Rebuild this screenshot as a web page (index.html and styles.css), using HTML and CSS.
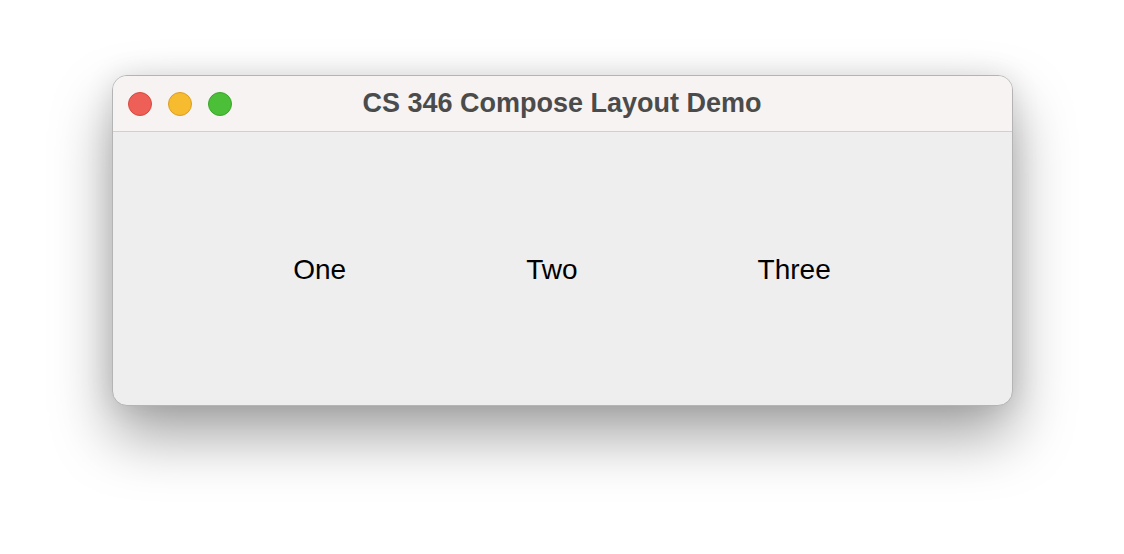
FILE: index.html
```html
<!DOCTYPE html>
<html>
<head>
<meta charset="utf-8">
<link rel="stylesheet" href="styles.css">
</head>
<body>
<div class="window">
  <div class="titlebar">
    <div class="lights">
      <span class="light red"></span>
      <span class="light yellow"></span>
      <span class="light green"></span>
    </div>
    <div class="title">CS 346 Compose Layout Demo</div>
  </div>
  <div class="content">
    <span class="item">One</span>
    <span class="item">Two</span>
    <span class="item">Three</span>
  </div>
</div>
</body>
</html>
```
FILE: styles.css
```css
html, body {
  margin: 0;
  padding: 0;
  background: #ffffff;
}
body {
  width: 1124px;
  height: 554px;
  display: flex;
  justify-content: center;
  align-items: flex-start;
  padding-top: 75px;
  box-sizing: border-box;
  font-family: "Liberation Sans", Arial, sans-serif;
  overflow: hidden;
}
.window {
  width: 901px;
  height: 331px;
  border-radius: 15px;
  overflow: hidden;
  display: flex;
  flex-direction: column;
  box-sizing: border-box;
  border: 1px solid #b4b4b4;
  box-shadow: 0 30px 60px rgba(0, 0, 0, 0.36), 0 0 28px rgba(0, 0, 0, 0.10);
  background: #eeeeee;
}
.titlebar {
  position: relative;
  height: 56px;
  flex: none;
  background: #f6f3f2;
  border-bottom: 1px solid #d2d0cf;
  box-sizing: border-box;
  display: flex;
  align-items: center;
  justify-content: center;
}
.lights {
  position: absolute;
  left: 15px;
  top: 16px;
  display: flex;
  gap: 16px;
}
.light {
  width: 24px;
  height: 24px;
  border-radius: 50%;
  box-sizing: border-box;
}
.red { background: #ee5f57; border: 1px solid #d7483f; }
.yellow { background: #f6bb2f; border: 1px solid #dc9d21; }
.green { background: #4bbf38; border: 1px solid #3aa52a; }
.title {
  font-weight: bold;
  font-size: 27px;
  color: #4b4b4b;
}
.content {
  flex: 1;
  display: flex;
  align-items: center;
  justify-content: center;
  gap: 180px;
  padding-top: 3px;
}
.item {
  font-size: 28px;
  color: #000;
}
```
